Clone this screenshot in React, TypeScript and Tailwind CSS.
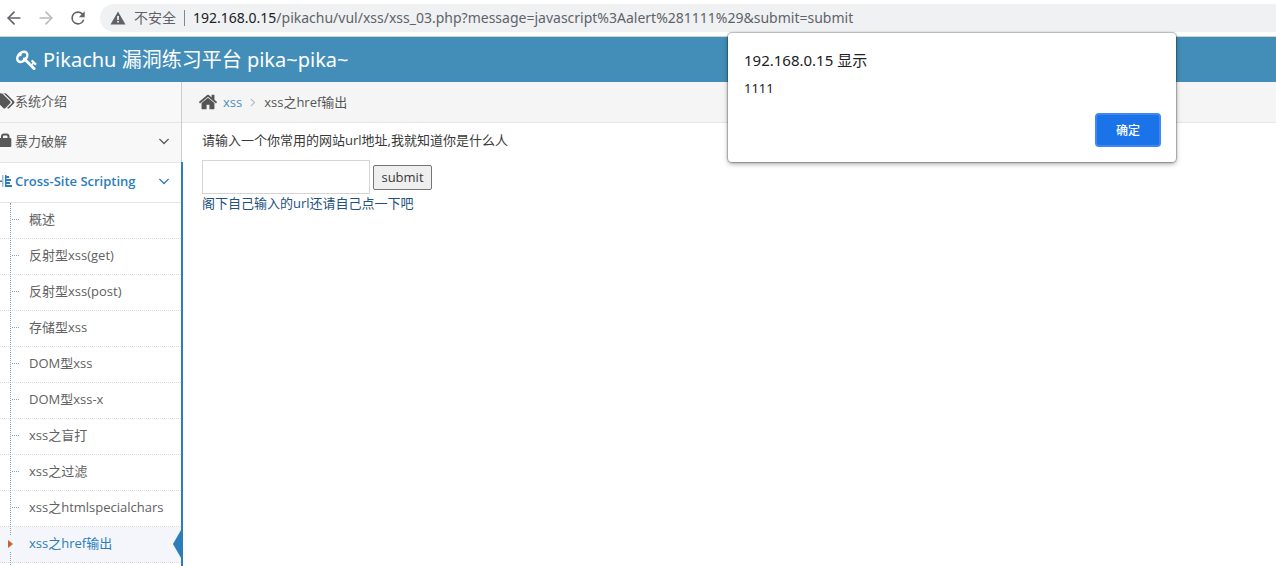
import { ArrowLeft, ArrowRight } from 'lucide-react';

const SUB_ITEMS = [
  '概述',
  '反射型xss(get)',
  '反射型xss(post)',
  '存储型xss',
  'DOM型xss',
  'DOM型xss-x',
  'xss之盲打',
  'xss之过滤',
  'xss之htmlspecialchars',
  'xss之href输出',
];

const ACTIVE_ITEM = 'xss之href输出';

const KeyIcon = () => (
  <svg viewBox="0 0 1792 1792" className="size-[22px] shrink-0" fill="currentColor" aria-hidden="true">
    <path d="M832 512q0-80-56-136t-136-56-136 56-56 136q0 42 19 83-41-19-83-19-80 0-136 56t-56 136 56 136 136 56 136-56 56-136q0-42-19-83 41 19 83 19 80 0 136-56t56-136zm851 704q0 17-49 66t-66 49q-9 0-28.5-16t-36.5-33-38.5-40-24.5-26l-96 96 220 220q28 28 28 68 0 42-39 81t-81 39q-40 0-68-28l-671-671q-176 131-365 131-163 0-265.5-102.5t-102.5-265.5q0-160 95-313t248-248 313-95q163 0 265.5 102.5t102.5 265.5q0 189-131 365l355 355 96-96q-3-3-26-24.5t-40-38.5-33-36.5-16-28.5q0-17 49-66t66-49q13 0 23 10 6 6 46 44.5t82 79.5 86.5 86 73 78 28.5 41z" />
  </svg>
);

const HomeIcon = () => (
  <svg viewBox="0 0 1792 1792" className="size-5 shrink-0" fill="currentColor" aria-hidden="true">
    <path d="M1472 992v480q0 26-19 45t-45 19h-384v-384h-256v384h-384q-26 0-45-19t-19-45v-480q0-1 .5-3t.5-3l575-474 575 474q1 2 1 6zm223-69l-62 74q-8 9-21 11h-3q-13 0-21-7l-692-577-692 577q-12 8-24 7-13-2-21-11l-62-74q-8-10-7-23.5t11-21.5l719-599q32-26 76-26t76 26l244 204v-195q0-14 9-23t23-9h192q14 0 23 9t9 23v408l219 182q10 8 11 21.5t-7 23.5z" />
  </svg>
);

const TagsIcon = () => (
  <svg viewBox="0 0 1920 1792" className="h-[18px] w-5 shrink-0" fill="currentColor" aria-hidden="true">
    <path d="M448 448q0-53-37.5-90.5t-90.5-37.5-90.5 37.5-37.5 90.5 37.5 90.5 90.5 37.5 90.5-37.5 37.5-90.5zm1067 576q0 53-37 90l-491 492q-39 37-91 37-53 0-90-37l-715-716q-38-37-64.5-101t-26.5-117v-416q0-52 38-90t90-38h416q53 0 117 26.5t102 64.5l715 714q37 39 37 91zm384 0q0 53-37 90l-491 492q-39 37-91 37-36 0-59-14t-53-45l470-470q37-37 37-90 0-52-37-91l-715-714q-38-38-102-64.5t-117-26.5h224q53 0 117 26.5t102 64.5l715 714q37 39 37 91z" />
  </svg>
);

const LockIcon = () => (
  <svg viewBox="0 0 20 18" className="h-[18px] w-5 shrink-0" aria-hidden="true">
    <path d="M7 7V4.500a2 2 0 0 1 2-2h2.500a2 2 0 0 1 2 2V7" fill="none" stroke="currentColor" strokeWidth="2" />
    <rect x="4" y="6" width="12.300" height="9" rx="1" fill="currentColor" />
  </svg>
);

const AlignIcon = () => (
  <svg viewBox="0 0 20 18" className="h-[18px] w-5 shrink-0" fill="currentColor" aria-hidden="true">
    <path d="M7 3h1.500v12H7z" opacity=".5" />
    <path d="M4 8.500h3v1.500H4zM10 3h1.500v12H10zM10 4h4v2h-4zM10 7h6v2h-6zM10 10h5v2h-5zM10 13h7v2h-7z" />
  </svg>
);

const AngleDownIcon = () => (
  <svg viewBox="0 0 1792 1792" className="ml-auto mr-2 size-[18px] shrink-0" fill="currentColor" aria-hidden="true">
    <path d="M1395 736q0 13-10 23l-466 466q-10 10-23 10t-23-10l-466-466q-10-10-10-23t10-23l50-50q10-10 23-10t23 10l393 393 393-393q10-10 23-10t23 10l50 50q10 10 10 23z" />
  </svg>
);

const AngleRightIcon = () => (
  <svg viewBox="0 0 1792 1792" className="mx-1 size-3.5 shrink-0 text-[#b2b6bf]" fill="currentColor" aria-hidden="true">
    <path d="M1171 960q0 13-10 23l-466 466q-10 10-23 10t-23-10l-50-50q-10-10-10-23t10-23l393-393-393-393q-10-10-10-23t10-23l50-50q10-10 23-10t23 10l466 466q10 10 10 23z" />
  </svg>
);

const AddressBar = () => (
  <div className="flex h-[37px] items-center overflow-hidden border-b border-[#d0d3d6] bg-white pl-1">
    <button type="button" aria-label="Back" className="w-5 text-[#5f6368]">
      <ArrowLeft className="size-5" />
    </button>
    <button type="button" aria-label="Forward" disabled className="ml-3 w-5 text-[#b9bbbd]">
      <ArrowRight className="size-5" />
    </button>
    <button type="button" aria-label="Reload" className="ml-3 w-5 text-[#5f6368]">
      <svg viewBox="0 0 24 24" className="size-5" fill="currentColor">
        <path d="M17.65 6.35A7.96 7.96 0 0 0 12 4a8 8 0 1 0 7.73 10h-2.08A6 6 0 1 1 12 6c1.66 0 3.14.69 4.22 1.78L13 11h7V4z" />
      </svg>
    </button>
    <div className="ml-3 flex h-7 flex-1 items-center rounded-l-full bg-[#eff1f3] pl-2.5 font-['Noto_Sans','Noto_Sans_CJK_SC',sans-serif] text-sm text-[#5f6368]">
      <svg viewBox="0 0 16 14" className="h-3.5 w-4 shrink-0" aria-hidden="true">
        <path d="M8 .5 15.500 13.500H.5z" fill="#5f6368" />
        <path d="M7.200 5h1.600v4H7.200zM7.200 10h1.600v1.600H7.200z" fill="#fff" />
      </svg>
      <span className="ml-2">不安全</span>
      <span className="mx-2 h-4 w-px bg-[#80868b]" />
      <span className="whitespace-nowrap">
        <span className="text-[#202124]">192.168.0.15</span>
        /pikachu/vul/xss/xss_03.php?message=javascript%3Aalert%281111%29&amp;submit=submit
      </span>
    </div>
  </div>
);

const Sidebar = () => (
  <nav className="w-[183px] shrink-0 text-[#585858]">
    <div className="mr-px overflow-hidden border-r border-[#ccc] bg-[#f8f8f8]">
      <a href="#intro" className="-ml-[5px] flex h-[41px] items-center border-b border-[#e5e5e5] pb-[3px]">
        <TagsIcon />
        <span>系统介绍</span>
      </a>
      <a href="#burteforce" className="-ml-[5px] flex h-[39px] items-center pb-[3px]">
        <LockIcon />
        <span>暴力破解</span>
        <AngleDownIcon />
      </a>
    </div>
    <div className="overflow-hidden border-r-2 border-[#2b7dbc] bg-white">
      <a
        href="#xss"
        className="-ml-[5px] flex h-[41px] items-center border-y border-[#e5e5e5] pb-[3px] font-semibold text-[#2b7dbc]"
      >
        <AlignIcon />
        <span>Cross-Site Scripting</span>
        <AngleDownIcon />
      </a>
      <ul className="relative">
        <li className="absolute inset-y-0 left-2.5 z-10 border-l border-dotted border-[#7fa3bf]" aria-hidden="true" />
        {SUB_ITEMS.map((item) => {
          const active = item === ACTIVE_ITEM;
          return (
            <li key={item} className="relative border-b border-dotted border-[#d8d8d8]">
              <a
                href={`#${item}`}
                className={`flex h-[35px] items-center pb-0.5 ${active ? 'bg-[#f4f6fb] text-[#2b7dbc]' : 'text-[#616161]'}`}
              >
                {active ? (
                  <span className="relative z-20 ml-2 bg-[#f4f6fb] py-1">
                    <svg viewBox="0 0 5 8" className="h-2 w-[5px]" fill="#c86139" aria-hidden="true">
                      <path d="M0 0v8l5-4z" />
                    </svg>
                  </span>
                ) : (
                  <span className="ml-3 w-[7px] border-t border-dotted border-[#7fa3bf]" />
                )}
                <span className={active ? 'ml-4 pb-0.5' : 'ml-2.5 pb-0.5'}>{item}</span>
              </a>
              {active && (
                <svg viewBox="0 0 8 28" className="absolute top-[3px] right-0 h-7 w-2" fill="#2b7dbc" aria-hidden="true">
                  <path d="M8 0v28L0 14z" />
                </svg>
              )}
            </li>
          );
        })}
        <li className="h-9" />
      </ul>
    </div>
  </nav>
);

const AlertDialog = () => (
  <div
    role="alertdialog"
    aria-labelledby="alert-title"
    className="absolute top-[33px] left-[728px] flex w-[448px] flex-col rounded bg-white px-4 pt-[15px] pb-[15px] font-['Noto_Sans','Noto_Sans_CJK_SC',sans-serif] text-[#202124] shadow-[0_0_1px_1px_rgba(0,0,0,0.25),0_2px_5px_rgba(0,0,0,0.35)]"
  >
    <h2 id="alert-title" className="text-[15px] leading-6">
      192.168.0.15 显示
    </h2>
    <p className="mt-1 text-[13px] leading-6">1111</p>
    <button
      type="button"
      className="mt-[13px] -mr-px h-[34px] w-[66px] self-end rounded border-2 border-[#4285f4] bg-[#1a73e8] pt-0.5 text-xs font-medium text-white"
    >
      确定
    </button>
  </div>
);

export default function App() {
  return (
    <div className="relative h-screen overflow-hidden bg-white font-['Open_Sans','Noto_Sans_CJK_SC',sans-serif] text-[13px] leading-5">
      <AddressBar />
      <header className="flex h-[45px] items-center bg-[#438eb9] pl-4 text-xl text-white">
        <KeyIcon />
        <h1 className="ml-[5px] font-['Noto_Sans','Noto_Sans_CJK_SC',sans-serif]">Pikachu 漏洞练习平台 pika~pika~</h1>
      </header>
      <div className="flex">
        <Sidebar />
        <main className="min-w-0 flex-1 text-[#393939]">
          <div className="-ml-px flex h-[41px] items-center border-b border-[#e5e5e5] bg-[#f5f5f5] pl-4 text-[#555]">
            <HomeIcon />
            <a href="#xss" className="ml-[5px] text-[#4c8fbd]">
              xss
            </a>
            <AngleRightIcon />
            <span>xss之href输出</span>
          </div>
          <form className="px-[19px] pt-[7px]" onSubmit={(e) => e.preventDefault()}>
            <label htmlFor="message">请输入一个你常用的网站url地址,我就知道你是什么人</label>
            <div className="mt-2.5 flex items-center gap-[3px]">
              <input id="message" name="message" type="text" className="h-[34px] w-[168px] border border-[#d5d5d5] px-1" />
              <button type="submit" className="h-[25px] w-[59px] rounded-xs border border-[#767676] bg-[#efefef]">
                submit
              </button>
            </div>
            <a href="#message" className="-mt-px block text-[#23527c]">
              阁下自己输入的url还请自己点一下吧
            </a>
          </form>
        </main>
      </div>
      <AlertDialog />
    </div>
  );
}
